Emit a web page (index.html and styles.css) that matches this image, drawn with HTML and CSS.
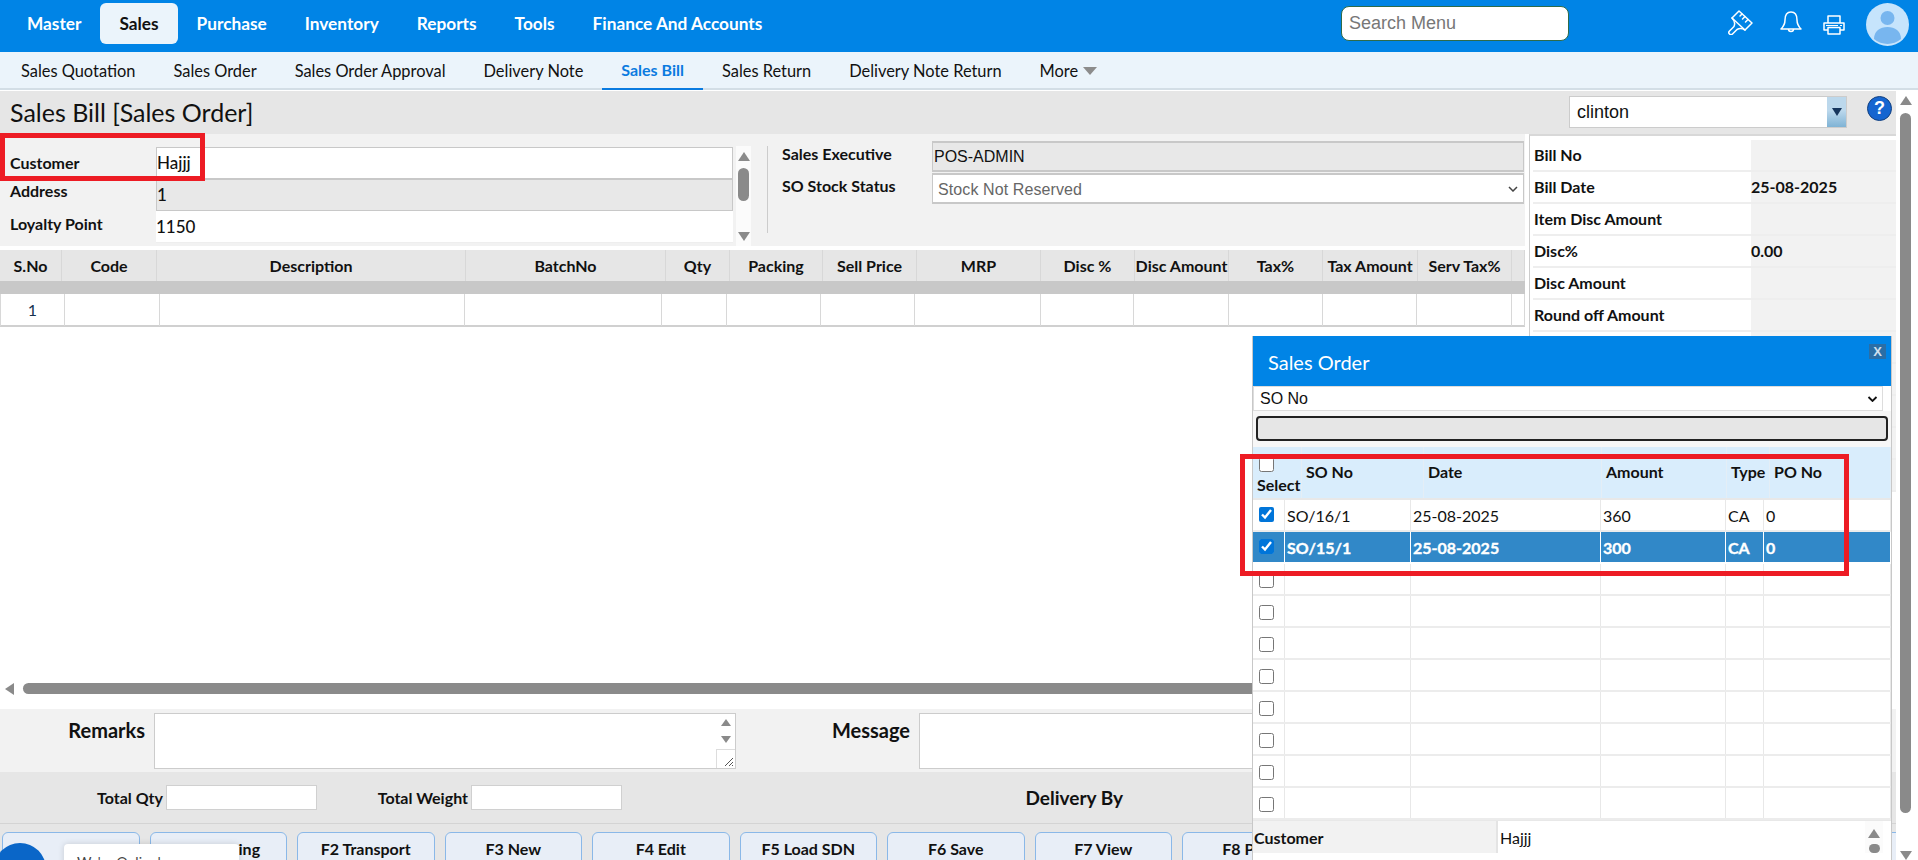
FILE: index.html
```html
<!DOCTYPE html>
<html lang="en">
<head>
<meta charset="utf-8">
<title>Sales Bill</title>
<link rel="stylesheet" href="styles.css">
</head>
<body>
<div class="page">
  <header class="topbar">
    <nav class="mainnav">
      <a class="mainitem">Master</a>
      <a class="mainitem active">Sales</a>
      <a class="mainitem">Purchase</a>
      <a class="mainitem">Inventory</a>
      <a class="mainitem">Reports</a>
      <a class="mainitem">Tools</a>
      <a class="mainitem">Finance And Accounts</a>
    </nav>
    <div class="searchmenu">Search Menu</div>
    <svg class="ic-brush" viewBox="0 0 25 25" fill="none" stroke="#fff" stroke-width="1.5" stroke-linejoin="round" stroke-linecap="round"><path d="M11 1 24 13 17 20 4 8Z"/><path d="M14 4 12 6M17 6.500 14.500 9M20 9.500 17.500 12"/><path d="M4 8Q8 12 6 16.500L1.500 21a2 2 0 0 0 3 3L9 19.500Q13 17.500 17 20"/></svg>
    <svg class="ic-bell" viewBox="0 0 22 23" fill="none" stroke="#fff" stroke-width="1.500" stroke-linejoin="round"><path d="M11 1C6.500 1 5 5 5 9c0 4-1 6-4 9h20c-3-3-4-5-4-9 0-4-1.500-8-6-8Z"/><path d="M8.500 18a2.500 2.500 0 0 0 5 0"/></svg>
    <svg class="ic-print" viewBox="0 0 22 20" fill="none" stroke="#fff" stroke-width="1.500" stroke-linejoin="round"><path d="M5 8V1h12v7"/><path d="M5 15H1V8h20v7h-4"/><path d="M5 12.500h12V19H5z"/><path d="M3 10.500h12" stroke-width="1"/><path d="M17 10.500h2" stroke-width="1"/></svg>
    <svg class="avatar" viewBox="0 0 43 43"><circle cx="21.500" cy="21.500" r="21.500" fill="#c6e4fc"/><circle cx="21.500" cy="15" r="7" fill="#78b6ef"/><path d="M8 36c0-8 6-12 13.500-12S35 28 35 36a21 21 0 0 1-27 0Z" fill="#78b6ef"/></svg>
  </header>

  <nav class="subnav">
    <a class="subitem">Sales Quotation</a>
    <a class="subitem">Sales Order</a>
    <a class="subitem">Sales Order Approval</a>
    <a class="subitem">Delivery Note</a>
    <a class="subitem active">Sales Bill</a>
    <a class="subitem">Sales Return</a>
    <a class="subitem">Delivery Note Return</a>
    <a class="subitem">More <i class="tri-more"></i></a>
  </nav>

  <div class="workspace">
    <main class="main">
      <div class="titlebar">
        <h1 class="title">Sales Bill [Sales Order]</h1>
        <div class="combo"><span class="combo-text">clinton</span><span class="combo-btn"><i class="tri-dark"></i></span></div>
        <div class="help">?</div>
      </div>

      <div class="content">
        <div class="leftcol">
          <section class="form">
            <div class="custgrid">
              <div class="flabel">Customer</div>
              <div class="fval bordered">Hajjj</div>
              <div class="flabel">Address</div>
              <div class="fval bordered greyed">1</div>
              <div class="flabel">Loyalty Point</div>
              <div class="fval">1150</div>
            </div>
            <div class="miniscroll">
              <i class="tri-up"></i><i class="mini-thumb"></i><i class="tri-down push"></i>
            </div>
            <div class="vdivider"></div>
            <div class="salesgrid">
              <div class="slabel">Sales Executive</div>
              <div class="sval greyed">POS-ADMIN</div>
              <div class="slabel">SO Stock Status</div>
              <div class="sval muted">Stock Not Reserved
                <svg class="chev" viewBox="0 0 10 6" fill="none" stroke="#444" stroke-width="1.500"><path d="M1 1l4 4 4-4"/></svg>
              </div>
            </div>
          </section>

          <div class="grid-head">
            <div>S.No</div><div>Code</div><div>Description</div><div>BatchNo</div><div>Qty</div><div>Packing</div><div>Sell Price</div><div>MRP</div><div>Disc %</div><div>Disc Amount</div><div>Tax%</div><div>Tax Amount</div><div>Serv Tax%</div><div></div>
          </div>
          <div class="grid-band"></div>
          <div class="grid-row">
            <div class="sn">1</div><div></div><div></div><div></div><div></div><div></div><div></div><div></div><div></div><div></div><div></div><div></div><div></div><div></div>
          </div>
        </div>

        <aside class="summary">
          <div class="sumrow"><div class="sumlabel">Bill No</div><div class="sumval"></div></div>
          <div class="sumrow"><div class="sumlabel">Bill Date</div><div class="sumval">25-08-2025</div></div>
          <div class="sumrow"><div class="sumlabel">Item Disc Amount</div><div class="sumval"></div></div>
          <div class="sumrow"><div class="sumlabel">Disc%</div><div class="sumval">0.00</div></div>
          <div class="sumrow"><div class="sumlabel">Disc Amount</div><div class="sumval"></div></div>
          <div class="sumrow"><div class="sumlabel">Round off Amount</div><div class="sumval"></div></div>
          <div class="sumrow"><div class="sumlabel"></div><div class="sumval"></div></div>
          <div class="sumrow"><div class="sumlabel"></div><div class="sumval"></div></div>
          <div class="sumrow"><div class="sumlabel"></div><div class="sumval"></div></div>
          <div class="sumrow"><div class="sumlabel"></div><div class="sumval"></div></div>
          <div class="sumrow"><div class="sumlabel"></div><div class="sumval"></div></div>
        </aside>
      </div>

      <div class="hscroll"><i class="tri-left"></i><i class="hthumb"></i></div>

      <section class="notes">
        <div class="notelabel remarks-label">Remarks</div>
        <div class="notebox remarks-box">
          <div class="notescroll"><i class="tri-up"></i><i class="tri-down"></i>
            <span class="resizer"><svg viewBox="0 0 12 12" fill="none" stroke="#555" stroke-width="1"><path d="M3 11 11 3M7 11l4-4M10 11l1-1"/></svg></span>
          </div>
        </div>
        <div class="notelabel message-label">Message</div>
        <div class="notebox message-box"></div>
      </section>

      <section class="totals">
        <div class="totlabel qty-label">Total Qty</div>
        <div class="totinput"></div>
        <div class="totlabel weight-label">Total Weight</div>
        <div class="totinput"></div>
        <div class="totlabel delivery-label">Delivery By</div>
      </section>

      <section class="fkeys">
        <div class="fkey"></div>
        <div class="fkey">F1 Shipping</div>
        <div class="fkey">F2 Transport</div>
        <div class="fkey">F3 New</div>
        <div class="fkey">F4 Edit</div>
        <div class="fkey">F5 Load SDN</div>
        <div class="fkey">F6 Save</div>
        <div class="fkey">F7 View</div>
        <div class="fkey">F8 Print</div>
        <div class="fkey"></div>
        <div class="fkey"></div>
        <div class="fkey"></div>
        <div class="fkey"></div>
      </section>
    </main>

    <div class="vscroll"><i class="tri-up"></i><i class="vthumb"></i><i class="tri-down"></i></div>
  </div>

  <section class="popup">
    <div class="pop-head">Sales Order<span class="pop-close">X</span></div>
    <div class="pop-select">SO No
      <svg class="chev dark" viewBox="0 0 10 6" fill="none" stroke="#111" stroke-width="1.800"><path d="M1 1l4 4 4-4"/></svg>
    </div>
    <div class="pop-filterwrap"><div class="pop-filter"></div></div>
    <div class="pop-thead">
      <div class="selcell"><input class="chk chk-head" type="checkbox"><span>Select</span></div>
      <div>SO No</div><div>Date</div><div>Amount</div><div>Type</div><div>PO No</div>
    </div>
    <div class="pop-row"><div class="chkcell"><input class="chk" type="checkbox" checked></div><div>SO/16/1</div><div>25-08-2025</div><div>360</div><div>CA</div><div>0</div></div>
    <div class="pop-row selected"><div class="chkcell"><input class="chk" type="checkbox" checked></div><div>SO/15/1</div><div>25-08-2025</div><div>300</div><div>CA</div><div>0</div></div>
    <div class="pop-row empty"><div class="chkcell"><input class="chk" type="checkbox"></div><div></div><div></div><div></div><div></div><div></div></div>
    <div class="pop-row empty"><div class="chkcell"><input class="chk" type="checkbox"></div><div></div><div></div><div></div><div></div><div></div></div>
    <div class="pop-row empty"><div class="chkcell"><input class="chk" type="checkbox"></div><div></div><div></div><div></div><div></div><div></div></div>
    <div class="pop-row empty"><div class="chkcell"><input class="chk" type="checkbox"></div><div></div><div></div><div></div><div></div><div></div></div>
    <div class="pop-row empty"><div class="chkcell"><input class="chk" type="checkbox"></div><div></div><div></div><div></div><div></div><div></div></div>
    <div class="pop-row empty"><div class="chkcell"><input class="chk" type="checkbox"></div><div></div><div></div><div></div><div></div><div></div></div>
    <div class="pop-row empty"><div class="chkcell"><input class="chk" type="checkbox"></div><div></div><div></div><div></div><div></div><div></div></div>
    <div class="pop-row empty"><div class="chkcell"><input class="chk" type="checkbox"></div><div></div><div></div><div></div><div></div><div></div></div>
    <div class="pop-customer">
      <div class="pc-label">Customer</div>
      <div class="pc-val">Hajjj</div>
      <div class="pc-scroll"><i class="tri-up"></i><i class="mini-thumb"></i></div>
    </div>
  </section>

  <div class="redbox redbox-customer"></div>
  <div class="redbox redbox-orders"></div>

  <div class="chat-circle"></div>
  <div class="chat-card">We're Online!</div>
</div>
</body>
</html>
```

FILE: styles.css
```css
* { box-sizing: border-box; }
html, body { margin: 0; padding: 0; height: 100%; overflow: hidden; background: #fff; }
body { font-family: "Lato", "Liberation Sans", sans-serif; color: #111; }
i { display: block; }

.page { position: relative; width: 1918px; height: 860px; overflow: hidden; display: flex; flex-direction: column; }

/* triangles */
.tri-up { width: 0; height: 0; border-left: 6px solid transparent; border-right: 6px solid transparent; border-bottom: 9px solid #8a8a8a; }
.tri-down { width: 0; height: 0; border-left: 6px solid transparent; border-right: 6px solid transparent; border-top: 9px solid #8a8a8a; }
.tri-left { width: 0; height: 0; border-top: 6px solid transparent; border-bottom: 6px solid transparent; border-right: 9px solid #8a8a8a; }
.tri-more { display: inline-block; width: 0; height: 0; margin-left: 1px; vertical-align: -1px; border-left: 7px solid transparent; border-right: 7px solid transparent; border-top: 8px solid #8c8c8c; }
.tri-dark { width: 0; height: 0; border-left: 5px solid transparent; border-right: 5px solid transparent; border-top: 8px solid #17365d; }

/* top bar */
.topbar { height: 52px; flex: none; background: #0084e6; display: flex; align-items: flex-start; position: relative; }
.mainnav { display: flex; padding: 3px 0 0 8px; width: 1341px; }
.mainitem { height: 41px; padding: 0 19px; display: flex; align-items: center; color: #fff; font-size: 17.250px; font-weight: 700; border-radius: 6px; white-space: nowrap; }
.mainitem.active { background: #ebf4fb; color: #111; }
.searchmenu { width: 228px; height: 35px; margin-top: 6px; background: #fff; border: 1px solid #2e6b4a; border-radius: 8px; padding: 0 7px; display: flex; align-items: center; color: #777; font: 18px "Liberation Sans", sans-serif; }
.ic-brush { width: 25px; height: 25px; margin: 10px 0 0 159px; }
.ic-bell { width: 22px; height: 23px; margin: 11px 0 0 27px; }
.ic-print { width: 22px; height: 20px; margin: 15px 0 0 21px; }
.avatar { width: 43px; height: 43px; margin: 3px 0 0 21px; }

/* sub nav */
.subnav { height: 38px; flex: none; background: #ebf4fb; border-bottom: 2px solid #d3dee6; display: flex; padding-left: 2px; }
.subitem { height: 38px; padding: 0 19px 1px; display: flex; align-items: center; white-space: pre; font-size: 16.400px; color: #111; }
.subitem.active { color: #0a7be0; font-size: 16px; font-weight: 700; border-bottom: 2px solid #0a7be0; }

/* workspace */
.workspace { flex: 1; display: flex; min-height: 0; padding-top: 1px; }
.main { width: 1896px; flex: none; display: flex; flex-direction: column; }
.vscroll { width: 19px; flex: none; display: flex; flex-direction: column; align-items: center; padding: 5px 0 0 0; }
.vscroll .tri-up { margin-top: 0; border-bottom-width: 9px; }
.vthumb { width: 11px; height: 700px; margin: 8px 0 38px; background: #8a8a8a; border-radius: 6px; }

/* title */
.titlebar { height: 43px; flex: none; background: #e6e6e6; display: flex; align-items: flex-start; }
.title { margin: 0; padding: 0 0 0 10px; width: 1569px; font-size: 25px; font-weight: 400; line-height: 42px; color: #111; }
.combo { width: 278px; height: 32px; margin-top: 5px; background: #fff; border: 1px solid #ccc; display: flex; font: 18px "Liberation Sans", sans-serif; }
.combo-text { flex: 1; padding: 0 7px; line-height: 30px; }
.combo-btn { width: 19px; background: linear-gradient(#bcd8ec 45%, #7fb3d5); display: flex; align-items: center; justify-content: center; }
.help { width: 25px; height: 25px; margin: 5px 0 0 20px; border-radius: 50%; background: #1565d0; border: 1px solid #12407f; color: #fff; font: 700 18px/23px "Liberation Sans", sans-serif; text-align: center; }

/* content */
.content { height: 546px; flex: none; display: flex; }
.leftcol { width: 1525px; flex: none; }

.form { height: 112px; background: #f2f2f2; display: flex; }
.custgrid { width: 736px; flex: none; display: grid; grid-template-columns: 156px 577px; grid-auto-rows: 32px; padding-top: 13px; align-content: start; }
.flabel { padding-left: 10px; font-size: 16px; font-weight: 700; line-height: 32px; }
.flabel:nth-child(3) { line-height: 24px; }
.flabel:nth-child(5) { line-height: 25px; }
.fval { background: #fff; font-size: 17px; font-weight: 500; line-height: 32px; border-bottom: 1px solid #eee; }
.fval.bordered { border: 1px solid #c8c8c8; line-height: 30px; }
.greyed { background: #e8e8e8 !important; }
.miniscroll { width: 15px; height: 100px; margin: 12px 0 0 0; flex: none; background: #fbfbfb; display: flex; flex-direction: column; align-items: center; padding-top: 6px; }
.mini-thumb { width: 11px; height: 33px; margin-top: 7px; border-radius: 6px; background: #8a8a8a; }
.push { margin-top: auto; margin-bottom: 5px; }
.vdivider { width: 1px; height: 87px; margin: 12px 0 0 16px; background: #ccc; flex: none; }
.salesgrid { width: 757px; margin-left: 14px; padding-top: 7px; display: grid; grid-template-columns: 150px 592px; grid-auto-rows: 32px; align-content: start; }
.slabel { font-size: 16px; font-weight: 700; line-height: 26px; }
.sval { position: relative; height: 31px; border: 1px solid #c8c8c8; border-top-width: 2px; border-bottom-width: 2px; background: #fff; font: 16px/28px "Liberation Sans", sans-serif; padding-left: 1px; }
.sval.muted { color: #666; padding-left: 5px; letter-spacing: .1px; line-height: 30px; }
.chev { position: absolute; right: 5px; top: 11px; width: 10px; height: 6px; }

/* grid */
.grid-head, .grid-row { display: grid; }
.grid-head { margin-top: 4px; height: 31px; background: #e6e6e6; grid-template-columns: 62px 95px 309px 200px 64px 93px 94px 124px 94px 94px 94px 95px 94px 13px; font-size: 16px; font-weight: 700; }
.grid-head > div { text-align: center; line-height: 31px; border-right: 1px solid #d8d8d8; white-space: nowrap; }
.grid-band { height: 13px; background: #c8c8c8; }
.grid-row { height: 33px; grid-template-columns: 65px 95px 305px 197px 65px 94px 94px 126px 93px 95px 94px 94px 95px 13px; border-bottom: 2px solid #d0d0d0; }
.grid-row > div { border-right: 1px solid #d8d8d8; }
.grid-row > div:first-child { border-left: 1px solid #d8d8d8; }
.sn { text-align: center; font-size: 16px; line-height: 32px; color: #16324f; }

/* summary */
.summary { width: 367px; margin-left: 4px; height: 359px; flex: none; border-left: 1px solid #ccc; border-top: 2px solid #d8d8d8; padding: 4px 0 0 3px; }
.sumrow { height: 32px; display: flex; border-bottom: 2px solid #eee; }
.sumlabel { width: 218px; background: #fff; font-size: 16px; font-weight: 700; line-height: 30px; padding-left: 1px; }
.sumval { flex: 1; background: #f2f2f2; font-size: 16px; font-weight: 700; line-height: 30px; }

/* hscroll */
.hscroll { height: 29px; flex: none; display: flex; align-items: flex-start; padding: 3px 0 0 5px; }
.hthumb { width: 1400px; height: 11px; margin-left: 9px; border-radius: 6px; background: #8a8a8a; }

/* notes */
.notes { height: 63px; flex: none; background: #f2f2f2; display: flex; padding-top: 4px; }
.notelabel { font-size: 20px; font-weight: 700; line-height: 35px; text-align: right; }
.remarks-label { width: 145px; }
.notebox { height: 56px; background: #fff; border: 1px solid #ccc; }
.remarks-box { width: 582px; margin-left: 9px; position: relative; display: flex; justify-content: flex-end; }
.notescroll { width: 19px; display: flex; flex-direction: column; align-items: center; padding-top: 5px; gap: 11px; position: relative; }
.notescroll .tri-up, .notescroll .tri-down { border-left-width: 5.500px; border-right-width: 5.500px; border-bottom-width: 7px; border-top-width: 7px; }
.notescroll .tri-down { border-bottom-width: 0; margin-top: -1px; }
.notescroll .tri-up { border-top-width: 0; }
.resizer { position: absolute; left: 0; bottom: 0; width: 19px; height: 19px; border: 1px solid #ddd; border-width: 1px 0 0 1px; }
.resizer svg { position: absolute; right: 1px; bottom: 1px; width: 12px; height: 12px; }
.message-label { width: 174px; }
.message-box { width: 960px; margin-left: 9px; }

/* totals */
.totals { height: 52px; flex: none; background: #e6e6e6; border-bottom: 1px solid #d4d4d4; display: flex; align-items: flex-start; padding-top: 13px; }
.totlabel { font-size: 16px; font-weight: 700; line-height: 25px; text-align: right; }
.qty-label { width: 163px; }
.weight-label { width: 151px; }
.totinput { width: 151px; height: 25px; margin-left: 3px; background: #fff; border: 1px solid #d0d0d0; }
.delivery-label { width: 501px; font-size: 19px; }

/* function keys */
.fkeys { flex: 1; background: #e6e6e6; display: flex; gap: 10px; padding: 8px 0 0 2px; overflow: hidden; }
.fkey { width: 137.500px; flex: none; height: 40px; background: #e8eef7; border: 1px solid #8ab8e8; border-radius: 6px; text-align: center; font-size: 16px; font-weight: 700; line-height: 32px; }

/* popup */
.popup { position: absolute; left: 1252px; top: 336px; width: 640px; height: 524px; background: #fff; border-left: 1px solid #c8c8c8; border-right: 1px solid #c8c8c8; overflow: hidden; }
.pop-head { position: relative; height: 50px; background: #0084e6; color: #fff; font-size: 20px; line-height: 52px; padding-left: 15px; }
.pop-close { position: absolute; left: 616px; top: 8px; width: 17px; height: 15px; background: #2a6ea6; color: #cfe0ee; font: 700 13px/15px "Liberation Sans", sans-serif; text-align: center; }
.pop-select { position: relative; height: 25px; margin-right: 8px; background: #fff; border: 1px solid #ddd; font: 16px/24px "Liberation Sans", sans-serif; padding-left: 6px; }
.pop-select .dark { right: 4px; top: 9px; width: 11px; }
.pop-filterwrap { height: 36px; padding: 5px 3px 0; background: #f7f7f7; }
.pop-filter { height: 25px; background: #e6e6e6; border: 2px solid #222; border-radius: 4px; }
.pop-thead { height: 53px; margin-top: 0; background: #d9edfc; border-bottom: 2px solid #e8e8e8; display: grid; grid-template-columns: 49px 122px 178px 125px 43px 1fr; font-size: 16px; font-weight: 700; line-height: 20px; }
.pop-thead > div { padding: 15px 0 0 4px; border-right: 1px solid #e4eef6; white-space: nowrap; }
.pop-thead > .selcell { padding: 0 0 0 4px; display: block; overflow: visible; position: relative; }
.selcell span { position: absolute; left: 4px; top: 28px; }
.chk { display: block; width: 15px; height: 15px; margin: 0; accent-color: #0075d9; }
.chk-head { position: absolute; left: 6px; top: 10px; }
.pop-row { height: 32px; display: grid; grid-template-columns: 32px 126px 190px 125px 38px 1fr; border-bottom: 2px solid #ececec; font-size: 16px; line-height: 31px; }
.pop-row > div { border-right: 1px solid #e8e8e8; padding-left: 2px; white-space: nowrap; }
.pop-row > .chkcell { padding: 7px 0 0 6px; }
.pop-row.empty > .chkcell { padding-top: 9px; }
.pop-row.selected { background: #3188c8; color: #fff; font-weight: 700; border-bottom-color: #fff; -webkit-text-stroke: .35px #fff; }
.pop-row.selected > div { border-right-color: #fff; }
.pop-customer { height: 33px; display: flex; border-top: 1px solid #e8e8e8; }
.pc-label { width: 245px; background: #f2f2f2; font-size: 16px; font-weight: 700; line-height: 34px; padding-left: 1px; border-right: 2px solid #e4e4e4; }
.pc-val { width: 367px; background: #fff; border-radius: 6px; font-size: 16px; line-height: 34px; padding-left: 2px; }
.pc-scroll { width: 18px; background: #fbfbfb; display: flex; flex-direction: column; align-items: center; padding-top: 8px; }
.pc-scroll .mini-thumb { margin-top: 6px; }

/* annotations */
.redbox { position: absolute; border: 5px solid #ed1c24; }
.redbox-customer { left: 0; top: 133px; width: 205px; height: 48px; }
.redbox-orders { left: 1240px; top: 454px; width: 609px; height: 122px; }

/* chat */
.chat-circle { position: absolute; left: -6px; top: 843px; width: 52px; height: 52px; border-radius: 50%; background: #0a66c8; }
.chat-card { position: absolute; left: 64px; top: 844px; width: 175px; height: 60px; background: #fff; border-radius: 4px; box-shadow: 0 0 6px rgba(0,0,0,.15); padding: 10px 0 0 13px; font-size: 14px; line-height: 16px; color: #444; }
```
